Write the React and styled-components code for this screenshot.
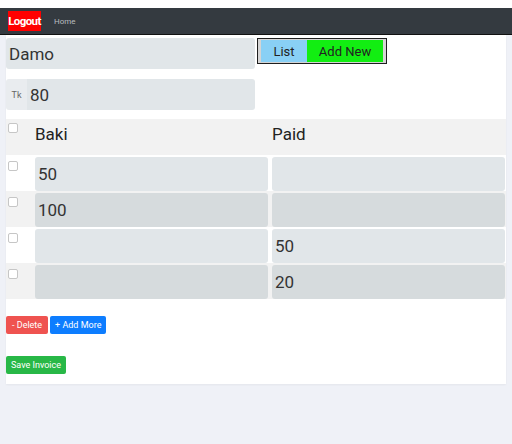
import React from "react";
import styled, { createGlobalStyle } from "styled-components";

const GlobalStyle = createGlobalStyle`
    html, body {
        margin: 0;
        padding: 0;
        background: #ffffff;
        font-family: Roboto, "Liberation Sans", Arial, sans-serif;
    }
`;

const Page = styled.div`
    min-height: 444px;
    padding-top: 8px;
    background: linear-gradient(#ffffff 0, #ffffff 8px, #eff1f7 8px);
`;

const Nav = styled.nav`
    display: flex;
    align-items: center;
    gap: 13px;
    height: 26px;
    padding: 0 8px;
    background: #343a40;
    border-bottom: 1px solid #111;
`;

const LogoutButton = styled.button`
    width: 33px;
    height: 20px;
    padding: 0;
    border: none;
    background: #ff0000;
    color: #fff;
    font-family: Roboto, sans-serif;
    font-size: 11.5px;
    font-weight: 700;
    letter-spacing: -0.6px;
    white-space: nowrap;
    cursor: pointer;
`;

const NavLink = styled.a`
    color: #b9bcbf;
    font-size: 8px;
    text-decoration: none;
`;

const Main = styled.main`
    padding: 0 6px;
`;

const Card = styled.div`
    background: #fff;
    padding: 3px 0 10px;
    box-shadow: 0 1px 2px rgba(0, 0, 0, 0.05);
`;

const Top = styled.div`
    display: flex;
    align-items: flex-start;
    gap: 2px;
`;

const Fields = styled.div`
    display: flex;
    flex-direction: column;
    gap: 10px;
    width: 249px;
`;

const TextInput = styled.input`
    box-sizing: border-box;
    width: 100%;
    height: ${(props) => props.height || 34}px;
    padding: 0 3px;
    border: none;
    border-radius: 3px;
    background: ${(props) => (props.dark ? "#d6dbdd" : "#e1e6e9")};
    color: #333;
    font-family: Roboto, sans-serif;
    font-size: 17px;
    outline: none;
`;

const InputGroup = styled.div`
    display: flex;
    height: 31px;
`;

const Addon = styled.span`
    display: flex;
    align-items: center;
    justify-content: center;
    width: 21px;
    flex-shrink: 0;
    background: #e9ecef;
    border-radius: 3px 0 0 3px;
    color: #666;
    font-size: 9px;
`;

const GroupInput = styled(TextInput)`
    border-radius: 0 3px 3px 0;
`;

const Toggle = styled.div`
    display: flex;
    padding: 1px 3px;
    background: #d4d4d4;
    border: 1px solid #1e1e1e;
`;

const ToggleButton = styled.button`
    height: 22px;
    padding: 0;
    width: ${(props) => props.width}px;
    border: none;
    background: ${(props) => props.bg};
    color: #222;
    font-family: Roboto, sans-serif;
    font-size: 13px;
    cursor: pointer;
`;

const Table = styled.div`
    margin-top: 9px;
`;

const Row = styled.div`
    display: grid;
    grid-template-columns: 25px 233px 233px;
    column-gap: 4px;
    height: 36px;
    box-sizing: border-box;
    padding: ${(props) => (props.header ? "0" : "2px 0 0")};
    background: ${(props) => (props.striped ? "#f2f2f2" : "#ffffff")};
`;

const CheckCell = styled.div`
    padding: 4px 0 0 2px;
`;

const Check = styled.span`
    display: block;
    width: 8px;
    height: 8px;
    border: 1px solid #c6c6c6;
    border-radius: 2px;
    background: #fff;
`;

const HeadCell = styled.div`
    padding-top: 5px;
    color: #222;
    font-size: 17px;
`;

const Actions = styled.div`
    display: flex;
    gap: 2px;
    margin-top: 17px;
`;

const Btn = styled.button`
    height: 18px;
    padding: 0 ${(props) => props.pad || 5}px;
    border: none;
    border-radius: 2px;
    background: ${(props) => props.bg};
    color: #fff;
    font-family: Roboto, sans-serif;
    font-size: 9px;
    cursor: pointer;
`;

const SaveRow = styled.div`
    margin-top: 19px;
`;

const rows = [
    { baki: "50", paid: "" },
    { baki: "100", paid: "" },
    { baki: "", paid: "50" },
    { baki: "", paid: "20" },
];

const App = () => {
    return (
        <Page>
            <GlobalStyle />
            <Nav>
                <LogoutButton>Logout</LogoutButton>
                <NavLink href="#">Home</NavLink>
            </Nav>
            <Main>
                <Card>
                    <Top>
                        <Fields>
                            <TextInput height={31} defaultValue="Damo" />
                            <InputGroup>
                                <Addon>Tk</Addon>
                                <GroupInput height={31} defaultValue="80" />
                            </InputGroup>
                        </Fields>
                        <Toggle>
                            <ToggleButton width={46} bg="#89d0f5">List</ToggleButton>
                            <ToggleButton width={76} bg="#12ee12">Add New</ToggleButton>
                        </Toggle>
                    </Top>

                    <Table>
                        <Row header striped>
                            <CheckCell><Check /></CheckCell>
                            <HeadCell>Baki</HeadCell>
                            <HeadCell>Paid</HeadCell>
                        </Row>
                        {rows.map((item, i) => (
                            <Row key={i} striped={i % 2 === 1}>
                                <CheckCell><Check /></CheckCell>
                                <TextInput dark={i % 2 === 1} defaultValue={item.baki} />
                                <TextInput dark={i % 2 === 1} defaultValue={item.paid} />
                            </Row>
                        ))}
                    </Table>

                    <Actions>
                        <Btn bg="#ef5350" pad={6}>- Delete</Btn>
                        <Btn bg="#0d7dff">+ Add More</Btn>
                    </Actions>
                    <SaveRow>
                        <Btn bg="#28b847">Save Invoice</Btn>
                    </SaveRow>
                </Card>
            </Main>
        </Page>
    );
};

export default App;
